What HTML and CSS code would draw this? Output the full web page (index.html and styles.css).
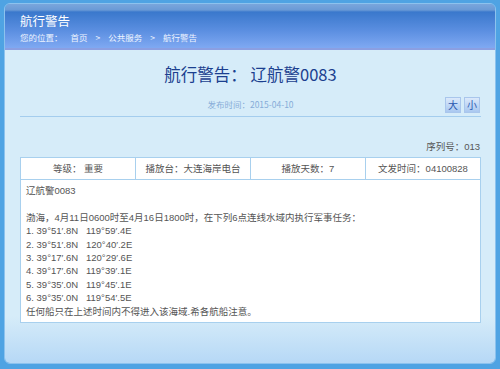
FILE: index.html
```html
<!DOCTYPE html>
<html lang="zh-CN">
<head>
    <meta charset="UTF-8">
    <title>航行警告</title>
    <link rel="stylesheet" href="styles.css">
</head>
<body>
<div class="frame">
    <div class="panel">
        <div class="panel-header">
            <div class="panel-title">航行警告</div>
            <div class="crumbs">您的位置：<span>首页</span><span>&gt;</span><span>公共服务</span><span>&gt;</span><span>航行警告</span></div>
        </div>
        <div class="panel-body">
            <h1 class="notice-title">航行警告： 辽航警0083</h1>
            <div class="notice-meta">
                <span class="notice-date">发布时间：2015-04-10</span>
                <div class="size-buttons">
                    <button class="size-btn">大</button>
                    <button class="size-btn">小</button>
                </div>
            </div>
            <div class="serial">序列号：013</div>
            <div class="notice-table">
                <div class="notice-row">
                    <div class="notice-cell">等级：&nbsp;重要</div>
                    <div class="notice-cell">播放台：大连海岸电台</div>
                    <div class="notice-cell">播放天数：7</div>
                    <div class="notice-cell">文发时间：04100828</div>
                </div>
                <div class="notice-content">
                    <p>辽航警0083</p>
                    <p>&nbsp;</p>
                    <p>渤海，4月11日0600时至4月16日1800时，在下列6点连线水域内执行军事任务：</p>
                    <p>1. 39°51′.8N&nbsp;&nbsp;&nbsp;119°59′.4E</p>
                    <p>2. 39°51′.8N&nbsp;&nbsp;&nbsp;120°40′.2E</p>
                    <p>3. 39°17′.6N&nbsp;&nbsp;&nbsp;120°29′.6E</p>
                    <p>4. 39°17′.6N&nbsp;&nbsp;&nbsp;119°39′.1E</p>
                    <p>5. 39°35′.0N&nbsp;&nbsp;&nbsp;119°45′.1E</p>
                    <p>6. 39°35′.0N&nbsp;&nbsp;&nbsp;119°54′.5E</p>
                    <p>任何船只在上述时间内不得进入该海域.希各航船注意。</p>
                </div>
            </div>
        </div>
    </div>
</div>
</body>
</html>
```

FILE: styles.css
```css
html, body {
    margin: 0;
    padding: 0;
    height: 100%;
    font-family: "Liberation Sans", "Noto Sans CJK SC", sans-serif;
}

.frame {
    height: 100%;
    box-sizing: border-box;
    background: #4fa3e3;
    padding: 3px 4px 5px 4px;
}

.panel {
    height: 100%;
    display: flex;
    flex-direction: column;
    border-radius: 6px;
    overflow: hidden;
    border: 1px solid #8cc2ee;
    box-sizing: border-box;
}

.panel-header {
    height: 46px;
    box-sizing: border-box;
    padding: 8px 0 0 15px;
    background: linear-gradient(to bottom, #7aa6dc 0, #6a9ad6 6px, #3a78cc 8px, #5a8ee0 26px, #7fa9f2 44px);
    border-bottom: 2px solid #8b9fe2;
    color: #fff;
}

.panel-title {
    font-family: "Noto Sans CJK SC", sans-serif;
    font-size: 12.5px;
    line-height: 18px;
}

.crumbs {
    margin-top: 2px;
    font-size: 8.5px;
    line-height: 11px;
    font-family: "Noto Sans CJK SC", sans-serif;
    color: #eef4ff;
}

.crumbs span {
    margin-left: 8px;
}

.panel-body {
    flex: 1;
    padding: 0 14px 0 15px;
    background: linear-gradient(to bottom, #d6ecf9 0, #d6ecf9 85%, #b6d8f6 100%);
}

.notice-title {
    margin: 11px 0 0 0;
    text-align: center;
    font-family: "Noto Sans CJK SC", sans-serif;
    font-weight: normal;
    font-size: 16.5px;
    line-height: 26px;
    color: #1b3f8f;
}

.notice-meta {
    display: flex;
    align-items: center;
    justify-content: center;
    position: relative;
    margin-top: 4px;
    height: 25px;
    border-bottom: 1px solid #a4cdee;
}

.notice-date {
    font-size: 8.5px;
    color: #87acd8;
    font-family: "Noto Sans CJK SC", sans-serif;
}

.size-buttons {
    position: absolute;
    right: 1px;
    top: 6px;
    display: flex;
    gap: 3px;
}

.size-btn {
    width: 16px;
    height: 16px;
    padding: 0;
    border: 1px solid #a9c6ec;
    background: linear-gradient(to bottom, #dbe9fb, #a9c8f0);
    color: #2a57b0;
    font-size: 10px;
    font-family: "Noto Sans CJK SC", sans-serif;
    line-height: 14px;
}

.serial {
    margin-top: 22px;
    text-align: right;
    font-size: 9.5px;
    line-height: 16px;
    color: #555;
    padding-right: 1px;
    height: 16px;
}

.notice-table {
    margin-top: 2px;
    background: #fff;
    border: 1px solid #a8d0ee;
}

.notice-row {
    display: flex;
    border-bottom: 1px solid #a8d0ee;
}

.notice-cell {
    flex: 1;
    text-align: center;
    font-size: 9.5px;
    color: #555;
    line-height: 21px;
    border-left: 1px solid #a8d0ee;
}

.notice-cell:first-child {
    border-left: 0;
}

.notice-content {
    padding: 4px 5px 4px 5px;
    font-size: 9.5px;
    color: #555;
}

.notice-content p {
    margin: 0;
    line-height: 13.4px;
}
```
